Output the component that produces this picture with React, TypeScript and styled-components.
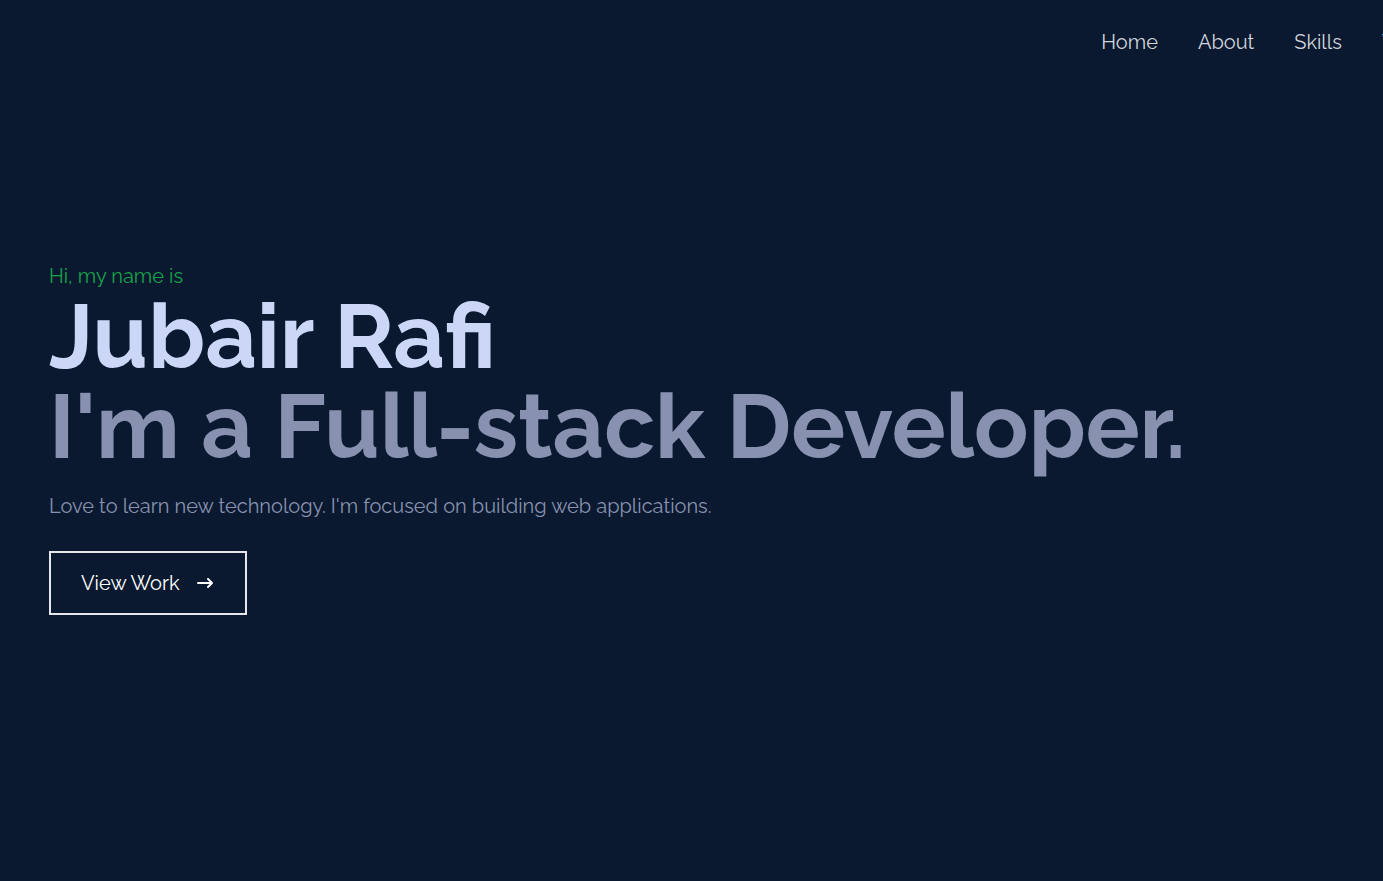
import React from "react";
import styled, { createGlobalStyle } from "styled-components";
import { HiArrowNarrowRight } from "react-icons/hi";

const GlobalStyle = createGlobalStyle`
  *, *::before, *::after { box-sizing: border-box; }
  body {
    margin: 0;
    background: #0a192f;
    font-family: Raleway, Lato, sans-serif;
    font-size: 20px;
    line-height: 30px;
  }
`;

const Page = styled.div`
  display: flex;
  flex-direction: column;
  min-height: 100vh;
  overflow: hidden;
`;

const Header = styled.header`
  display: flex;
  justify-content: flex-end;
  align-items: center;
  height: 84px;
`;

const NavList = styled.ul`
  display: flex;
  gap: 40px;
  margin: 0 -48px 0 0;
  padding: 0;
  list-style: none;
`;

const NavItem = styled.li`
  flex: 0 0 auto;
`;

const NavLink = styled.a`
  color: #d1d5db;
  text-decoration: none;
`;

const Hero = styled.main`
  flex: 1;
  display: flex;
  flex-direction: column;
  justify-content: center;
  align-items: flex-start;
  padding: 0 49px 79px;
`;

const Greeting = styled.p`
  margin: 0;
  color: #16a34a;
`;

const Title = styled.h1<{ $tone: string }>`
  margin: 0;
  color: ${(p) => p.$tone};
  font-size: 90px;
  font-weight: 700;
  line-height: 90px;
`;

const Subtitle = styled(Title).attrs({ as: "h2" })``;

const Intro = styled.p`
  margin: 0;
  padding: 20px 0;
  color: #8892b0;
`;

const WorkButton = styled.button`
  display: flex;
  align-items: center;
  gap: 15px;
  margin: 10px 0;
  padding: 15px 30px;
  border: 2px solid #e5e7eb;
  background: transparent;
  color: #fff;
  font: inherit;
  cursor: pointer;
`;

const links = ["Home", "About", "Skills", "Work"];

export default function App() {
  return (
    <>
      <GlobalStyle />
      <Page>
        <Header>
          <nav>
            <NavList>
              {links.map((name) => (
                <NavItem key={name}>
                  <NavLink href={`#${name.toLowerCase()}`}>{name}</NavLink>
                </NavItem>
              ))}
            </NavList>
          </nav>
        </Header>
        <Hero>
          <Greeting>Hi, my name is</Greeting>
          <Title $tone="#ccd6f6">Jubair Rafi</Title>
          <Subtitle $tone="#8892b0">I'm a Full-stack Developer.</Subtitle>
          <Intro>Love to learn new technology. I'm focused on building web applications.</Intro>
          <WorkButton type="button">
            View Work
            <HiArrowNarrowRight size={20} aria-hidden="true" />
          </WorkButton>
        </Hero>
      </Page>
    </>
  );
}
